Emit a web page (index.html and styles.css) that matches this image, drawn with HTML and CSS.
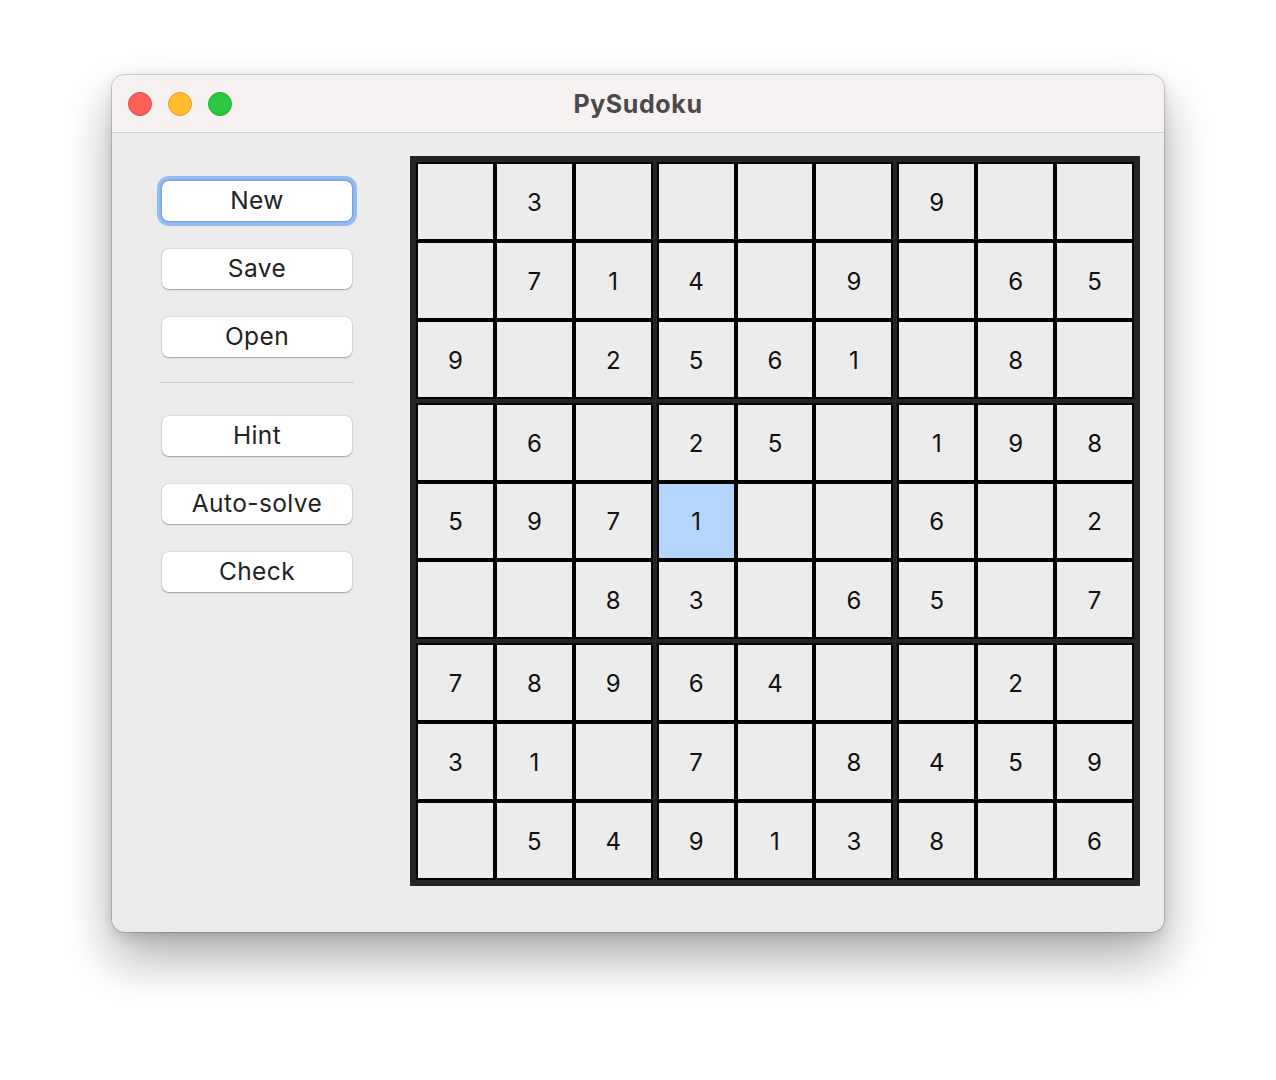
FILE: index.html
```html
<!DOCTYPE html>
<html>
<head>
<meta charset="utf-8">
<link rel="stylesheet" href="styles.css">
</head>
<body>
<div class="window">
  <div class="titlebar">
    <div class="lights">
      <span class="light red"></span>
      <span class="light yellow"></span>
      <span class="light green"></span>
    </div>
    <div class="title">PySudoku</div>
  </div>
  <div class="content">
    <div class="sidebar">
      <button class="btn focus">New</button>
      <button class="btn">Save</button>
      <button class="btn">Open</button>
      <div class="sep"></div>
      <button class="btn">Hint</button>
      <button class="btn">Auto-solve</button>
      <button class="btn">Check</button>
    </div>
    <div class="board">
      <div class="block">
        <div class="cell"></div><div class="cell">3</div><div class="cell"></div>
        <div class="cell"></div><div class="cell">7</div><div class="cell">1</div>
        <div class="cell">9</div><div class="cell"></div><div class="cell">2</div>
      </div>
      <div class="block">
        <div class="cell"></div><div class="cell"></div><div class="cell"></div>
        <div class="cell">4</div><div class="cell"></div><div class="cell">9</div>
        <div class="cell">5</div><div class="cell">6</div><div class="cell">1</div>
      </div>
      <div class="block">
        <div class="cell">9</div><div class="cell"></div><div class="cell"></div>
        <div class="cell"></div><div class="cell">6</div><div class="cell">5</div>
        <div class="cell"></div><div class="cell">8</div><div class="cell"></div>
      </div>
      <div class="block">
        <div class="cell"></div><div class="cell">6</div><div class="cell"></div>
        <div class="cell">5</div><div class="cell">9</div><div class="cell">7</div>
        <div class="cell"></div><div class="cell"></div><div class="cell">8</div>
      </div>
      <div class="block">
        <div class="cell">2</div><div class="cell">5</div><div class="cell"></div>
        <div class="cell sel">1</div><div class="cell"></div><div class="cell"></div>
        <div class="cell">3</div><div class="cell"></div><div class="cell">6</div>
      </div>
      <div class="block">
        <div class="cell">1</div><div class="cell">9</div><div class="cell">8</div>
        <div class="cell">6</div><div class="cell"></div><div class="cell">2</div>
        <div class="cell">5</div><div class="cell"></div><div class="cell">7</div>
      </div>
      <div class="block">
        <div class="cell">7</div><div class="cell">8</div><div class="cell">9</div>
        <div class="cell">3</div><div class="cell">1</div><div class="cell"></div>
        <div class="cell"></div><div class="cell">5</div><div class="cell">4</div>
      </div>
      <div class="block">
        <div class="cell">6</div><div class="cell">4</div><div class="cell"></div>
        <div class="cell">7</div><div class="cell"></div><div class="cell">8</div>
        <div class="cell">9</div><div class="cell">1</div><div class="cell">3</div>
      </div>
      <div class="block">
        <div class="cell"></div><div class="cell">2</div><div class="cell"></div>
        <div class="cell">4</div><div class="cell">5</div><div class="cell">9</div>
        <div class="cell">8</div><div class="cell"></div><div class="cell">6</div>
      </div>
    </div>
  </div>
</div>
</body>
</html>
```

FILE: styles.css
```css
html, body {
  margin: 0;
  padding: 0;
  background: #ffffff;
}
body {
  width: 1276px;
  height: 1080px;
  overflow: hidden;
  font-family: Inter, "Liberation Sans", sans-serif;
}
.window {
  margin: 75px 0 0 112px;
  width: 1052px;
  height: 857px;
  box-sizing: border-box;
  border-radius: 13px;
  background: #ececec;
  overflow: hidden;
  box-shadow: 0 0 0 1px rgba(0,0,0,0.16), 0 26px 50px rgba(0,0,0,0.32), 0 4px 14px rgba(0,0,0,0.12);
}
.titlebar {
  height: 57px;
  background: #f7f1f1;
  border-bottom: 1px solid #d4d0d0;
  display: flex;
  align-items: center;
  position: relative;
}
.lights {
  display: flex;
  gap: 16px;
  padding-left: 16px;
  padding-top: 1px;
}
.light {
  width: 22px;
  height: 22px;
  border-radius: 50%;
  border: 1px solid;
}
.red { background: #fe5f57; border-color: #e2463f; }
.yellow { background: #febc2e; border-color: #e0a026; }
.green { background: #28c840; border-color: #1dac2c; }
.title {
  position: absolute;
  left: 0;
  right: 0;
  top: 0;
  bottom: 0;
  display: flex;
  align-items: center;
  justify-content: center;
  font-weight: 700;
  font-size: 25px;
  letter-spacing: 0.6px;
  color: #4b4949;
  padding-top: 1px;
}
.content {
  display: flex;
  align-items: flex-start;
}
.sidebar {
  width: 190px;
  padding: 48px 0 0 50px;
  display: flex;
  flex-direction: column;
}
.btn {
  width: 190px;
  height: 40px;
  margin-bottom: 28px;
  border: none;
  border-radius: 7px;
  background: #ffffff;
  font-family: Inter, "Liberation Sans", sans-serif;
  font-size: 24.5px;
  letter-spacing: 0.4px;
  color: #222222;
  padding: 0 0 2px 0;
  box-shadow: 0 0 0 1px rgba(0,0,0,0.06), 0 1px 1.5px rgba(0,0,0,0.28);
}
.btn.focus {
  box-shadow: 0 0 0 1.5px #7aa6e8, 0 0 0 5px #94bcf2;
}
.sep {
  height: 1px;
  background: #c9c9c9;
  margin: -3px -2px 33px -2px;
}
.board {
  margin: 23px 0 0 58px;
  width: 730px;
  height: 730px;
  box-sizing: border-box;
  background: #242424;
  padding: 6px;
  display: grid;
  grid-template-columns: repeat(3, 1fr);
  grid-template-rows: repeat(3, 1fr);
  gap: 4px;
}
.block {
  display: grid;
  grid-template-columns: repeat(3, 1fr);
  grid-template-rows: repeat(3, 1fr);
}
.cell {
  border: 2px solid #000000;
  background: #ececec;
  display: flex;
  align-items: center;
  justify-content: center;
  font-family: Inter, "Liberation Sans", sans-serif;
  font-size: 24px;
  color: #111111;
  padding-top: 2px;
}
.cell.sel {
  background: #b4d6fe;
}
```
